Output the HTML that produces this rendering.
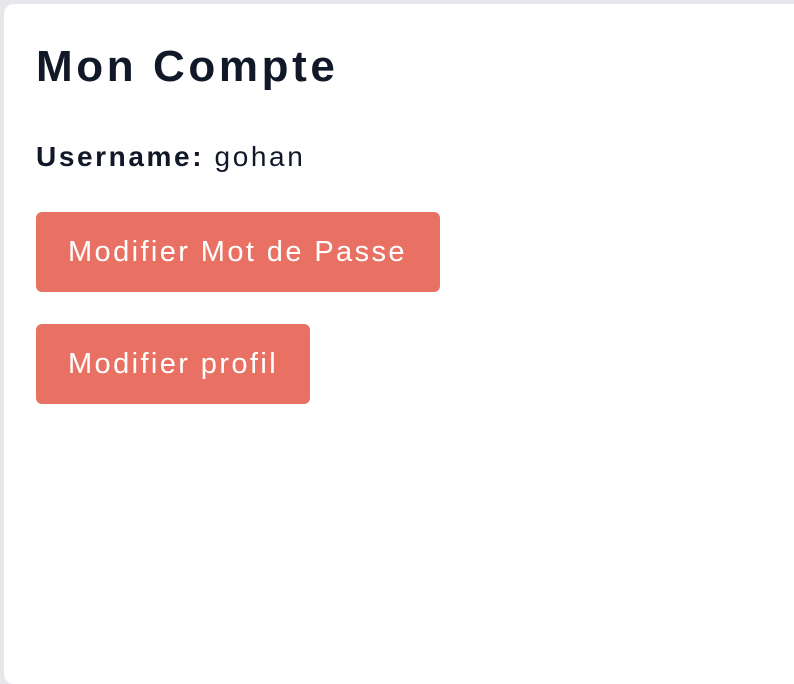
<!DOCTYPE html>
<html><head><style>
html,body{margin:0;padding:0;width:794px;height:636px;overflow:hidden;background:#e5e7eb;font-family:"Liberation Sans",sans-serif;}
.card{position:absolute;left:4px;top:4px;width:820px;height:680px;background:#fff;border-radius:10px;}
h1{position:absolute;left:32px;top:37px;margin:0;font-size:44px;font-weight:700;color:#111827;line-height:52px;letter-spacing:3.6px;white-space:nowrap}
.u{position:absolute;left:32px;top:136px;font-size:28px;color:#111827;line-height:34px;letter-spacing:2.6px;white-space:nowrap}
.btn{position:absolute;left:32px;height:80px;background:#e87163;color:#fff;border-radius:6px;font-size:29px;line-height:80px;padding:0 0 0 32px;box-sizing:border-box;letter-spacing:2.4px;white-space:nowrap;overflow:hidden}
</style></head><body>
<div class="card">
<h1>Mon Compte</h1>
<div class="u"><b>Username:</b> gohan</div>
<div class="btn" style="top:208px;width:404px">Modifier Mot de Passe</div>
<div class="btn" style="top:320px;width:274px">Modifier profil</div>
</div>
</body></html>
